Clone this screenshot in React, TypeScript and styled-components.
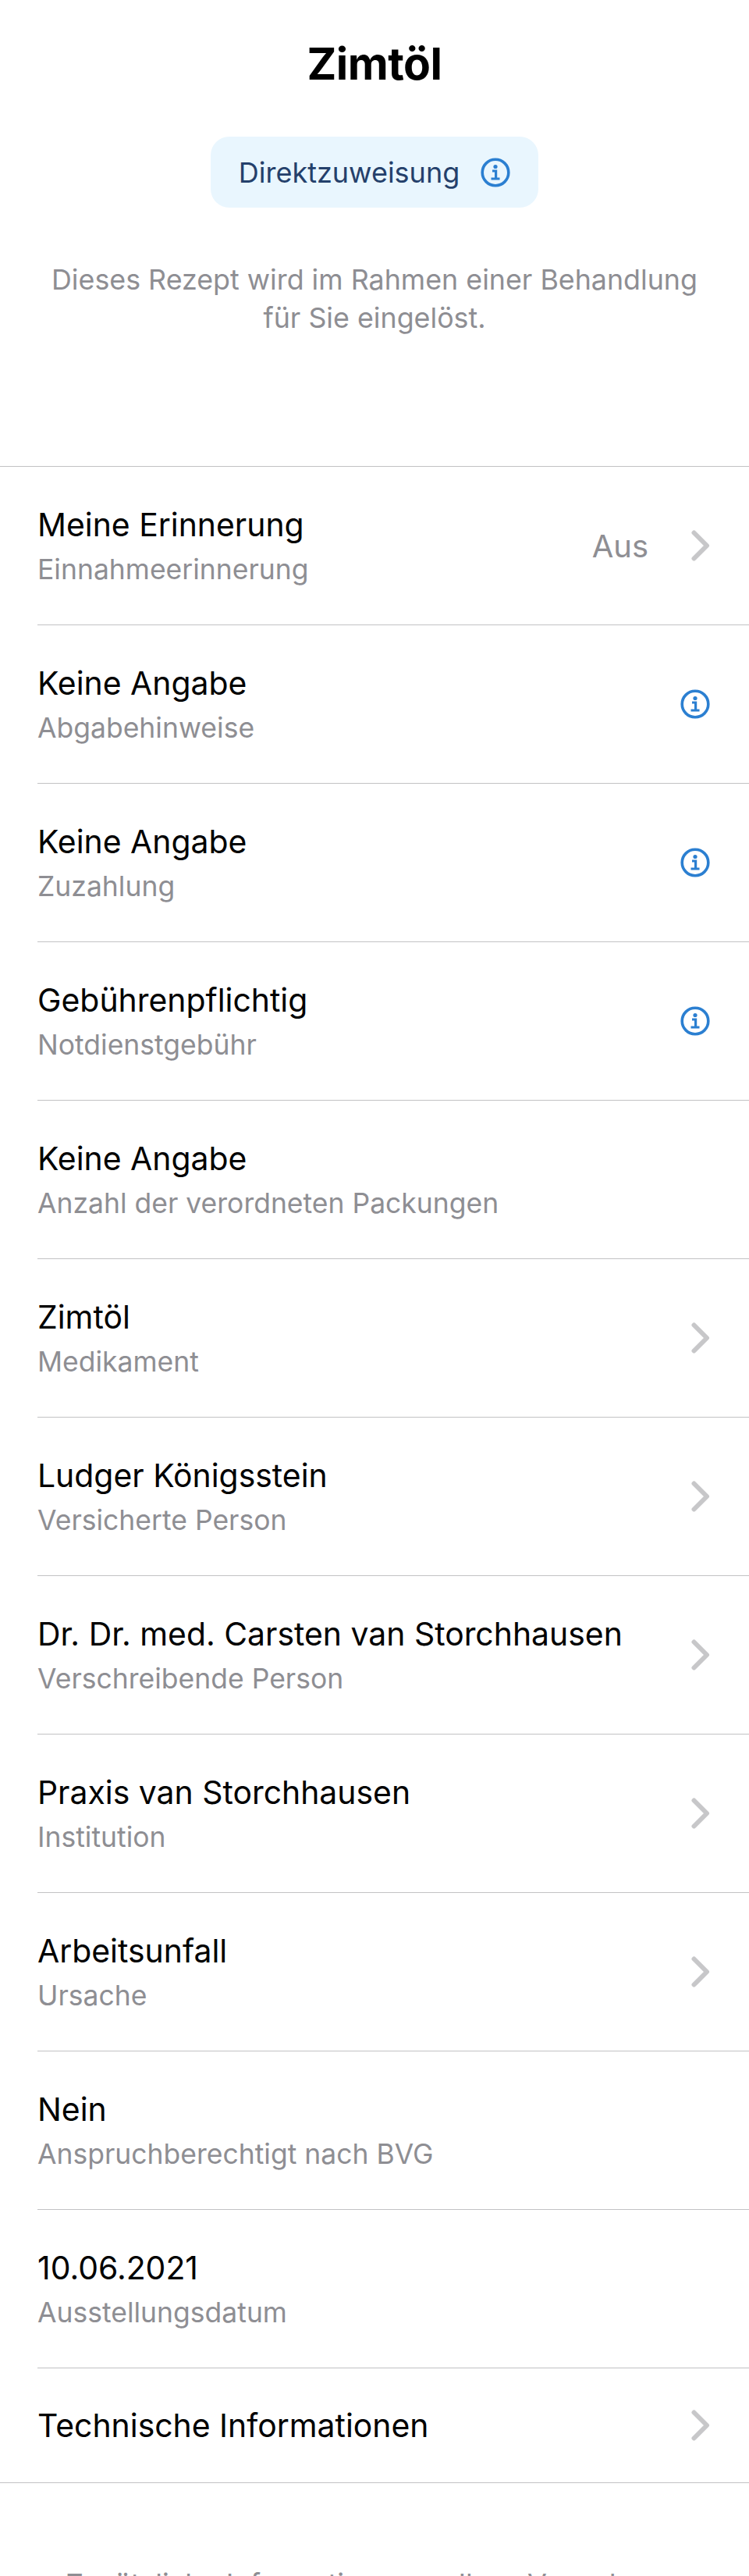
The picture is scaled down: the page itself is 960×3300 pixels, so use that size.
import React from "react";
import styled, { createGlobalStyle } from "styled-components";

const Global = createGlobalStyle`
  html, body { margin: 0; padding: 0; background: #fff; }
  body { font-family: Inter, "Noto Sans", "Liberation Sans", sans-serif; height: 3300px; overflow: hidden; }
`;

const Page = styled.div`
  width: 960px;
  height: 3300px;
  overflow: hidden;
  background: #fff;
`;

const Head = styled.header`
  display: flex;
  flex-direction: column;
  align-items: center;
  padding-top: 50px;
  height: 597px;
  box-sizing: border-box;
`;

const Title = styled.h1`
  margin: 0;
  font-size: 57px;
  line-height: 64px;
  font-weight: 700;
  color: #000;
  letter-spacing: -0.5px;
`;

const Pill = styled.div`
  margin-top: 61px;
  width: 420px;
  height: 91px;
  border-radius: 24px;
  background: #e9f6fe;
  display: flex;
  align-items: center;
  justify-content: center;
  gap: 27px;
  color: #24406b;
  font-size: 36px;
`;

const Note = styled.p`
  margin: 68px 0 0;
  font-size: 35.8px;
  line-height: 49px;
  color: #8e8e93;
  text-align: center;
`;

const List = styled.div`
  border-top: 1px solid #c2c2c4;
  border-bottom: 1px solid #c2c2c4;
`;

const Row = styled.div<{ $single?: boolean }>`
  height: ${(p) => (p.$single ? 146 : 202)}px;
  margin-left: 48px;
  padding-right: 50px;
  display: flex;
  align-items: center;
  justify-content: space-between;
  & + & { border-top: 1px solid #c2c2c4; }
`;

const Texts = styled.div`
  display: flex;
  flex-direction: column;
  gap: 12px;
`;

const Main = styled.div`
  font-size: 40.9px;
  line-height: 50px;
  color: #000;
`;

const Sub = styled.div`
  font-size: 35.5px;
  line-height: 42px;
  color: #8e8e93;
`;

const Side = styled.div`
  display: flex;
  align-items: center;
  gap: 55px;
  color: #8e8e93;
  font-size: 40px;
`;

const Footer = styled.p`
  margin: 105px 0 0;
  font-size: 36px;
  line-height: 49px;
  color: #8e8e93;
  text-align: center;
`;

function InfoIcon() {
  return (
    <svg width="38" height="38" viewBox="0 0 38 38" fill="none">
      <circle cx="19" cy="19" r="16.8" stroke="#2b7fd1" strokeWidth="3.6" />
      <circle cx="19" cy="11.5" r="2.6" fill="#2b7fd1" />
      <path d="M15 17h4.6v9.5M13.5 27h11" stroke="#2b7fd1" strokeWidth="3.2" />
    </svg>
  );
}

function Chevron() {
  return (
    <svg width="24" height="40" viewBox="0 0 24 40" fill="none">
      <path d="M3.5 3.5 20 20 3.5 36.5" stroke="#c7c7c9" strokeWidth="6" strokeLinecap="round" strokeLinejoin="round" />
    </svg>
  );
}

interface Item {
  main: string;
  sub?: string;
  side?: "info" | "chevron";
  value?: string;
}

const items: Item[] = [
  { main: "Meine Erinnerung", sub: "Einnahmeerinnerung", side: "chevron", value: "Aus" },
  { main: "Keine Angabe", sub: "Abgabehinweise", side: "info" },
  { main: "Keine Angabe", sub: "Zuzahlung", side: "info" },
  { main: "Gebührenpflichtig", sub: "Notdienstgebühr", side: "info" },
  { main: "Keine Angabe", sub: "Anzahl der verordneten Packungen" },
  { main: "Zimtöl", sub: "Medikament", side: "chevron" },
  { main: "Ludger Königsstein", sub: "Versicherte Person", side: "chevron" },
  { main: "Dr. Dr. med. Carsten van Storchhausen", sub: "Verschreibende Person", side: "chevron" },
  { main: "Praxis van Storchhausen", sub: "Institution", side: "chevron" },
  { main: "Arbeitsunfall", sub: "Ursache", side: "chevron" },
  { main: "Nein", sub: "Anspruchberechtigt nach BVG" },
  { main: "10.06.2021", sub: "Ausstellungsdatum" },
  { main: "Technische Informationen", side: "chevron" },
];

export default function App() {
  return (
    <Page>
      <Global />
      <Head>
        <Title>Zimtöl</Title>
        <Pill>
          Direktzuweisung
          <InfoIcon />
        </Pill>
        <Note>
          Dieses Rezept wird im Rahmen einer Behandlung
          <br />
          für Sie eingelöst.
        </Note>
      </Head>
      <List>
        {items.map((item, i) => (
          <Row key={i} $single={!item.sub}>
            <Texts>
              <Main>{item.main}</Main>
              {item.sub && <Sub>{item.sub}</Sub>}
            </Texts>
            <Side>
              {item.value && <span>{item.value}</span>}
              {item.side === "info" && <InfoIcon />}
              {item.side === "chevron" && <Chevron />}
            </Side>
          </Row>
        ))}
      </List>
      <Footer>Zusätzliche Informationen zu Ihrer Verordnung</Footer>
    </Page>
  );
}
